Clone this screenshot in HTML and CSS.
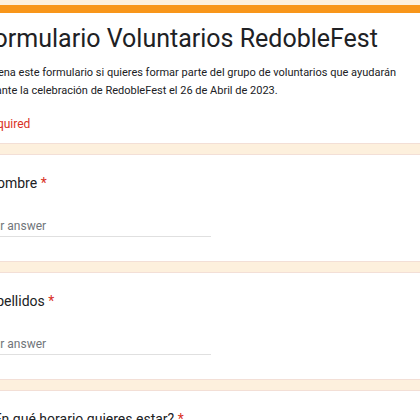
FILE: index.html
```html
<!DOCTYPE html>
<html lang="es">
<head>
<meta charset="utf-8">
<title>Formulario Voluntarios RedobleFest</title>
<link rel="stylesheet" href="styles.css">
</head>
<body>
<main class="form">
  <section class="card header-card">
    <h1 class="form-title">Formulario Voluntarios RedobleFest</h1>
    <p class="form-desc"><span class="desc-line">Rellena este formulario si quieres formar parte del grupo de voluntarios que ayudarán</span><span class="desc-line">durante la celebración de RedobleFest el 26 de Abril de 2023.</span></p>
    <p class="required-note">* Required</p>
  </section>
  <section class="card question">
    <div class="q-title">Nombre <span class="star">*</span></div>
    <div class="answer">Your answer</div>
  </section>
  <section class="card question">
    <div class="q-title">Apellidos <span class="star">*</span></div>
    <div class="answer">Your answer</div>
  </section>
  <section class="card question">
    <div class="q-title">¿En qué horario quieres estar? <span class="star">*</span></div>
    <div class="answer">Your answer</div>
  </section>
</main>
</body>
</html>
```

FILE: styles.css
```css
html, body {
  margin: 0;
  padding: 0;
  overflow: hidden;
  height: 100%;
}
body {
  background: #fdf0dd;
  font-family: Roboto, "Liberation Sans", sans-serif;
  color: #202124;
}
.form {
  display: flex;
  flex-direction: column;
  gap: 10px;
  padding-top: 5px;
  margin-left: -45px;
  width: 560px;
}
.card {
  background: #fff;
  border: 1px solid #f3dfd6;
  border-radius: 8px;
  padding: 0 24px;
}
.header-card {
  border-top: 8px solid #f8961a;
  padding-top: 10px;
  padding-bottom: 10px;
}
.form-title {
  margin: 0;
  font-weight: 400;
  font-size: 25px;
  line-height: 32px;
  color: #202124;
  white-space: nowrap;
}
.form-desc {
  margin: 9px 0 0;
  font-size: 11px;
  line-height: 18px;
  color: #202124;
  white-space: nowrap;
}
.desc-line {
  display: block;
}
.required-note {
  margin: 15px 0 0 -5px;
  font-size: 12px;
  line-height: 18px;
  color: #d93025;
}
.question {
  padding-top: 17px;
  padding-bottom: 24px;
}
.q-title {
  font-size: 14px;
  line-height: 22px;
  color: #202124;
  padding-left: 7px;
  white-space: nowrap;
}
.star {
  color: #d93025;
}
.answer {
  margin-top: 22px;
  width: 231px;
  font-size: 12px;
  line-height: 20px;
  color: #70757a;
  border-bottom: 1px solid #e0e0e0;
}
```
